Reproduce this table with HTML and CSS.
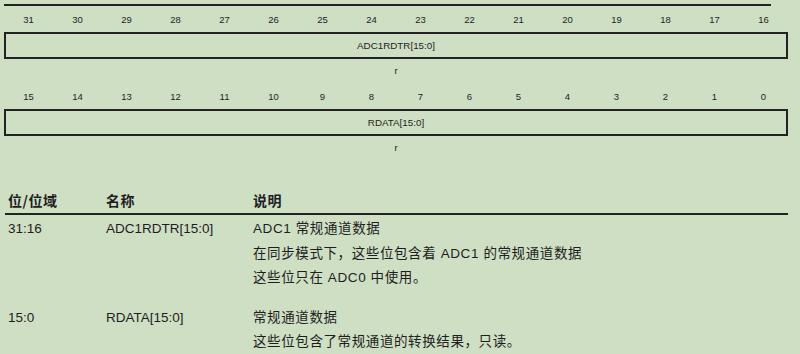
FILE: index.html
```html
<!DOCTYPE html>
<html lang="zh-CN">
<head>
  <meta charset="UTF-8">
  <title>ADC 常规数据寄存器</title>
  <link rel="stylesheet" href="styles.css">
</head>
<body>

  <div class="reg">
    <div class="topline"></div>

    <div class="bits">
      <span>31</span><span>30</span><span>29</span><span>28</span>
      <span>27</span><span>26</span><span>25</span><span>24</span>
      <span>23</span><span>22</span><span>21</span><span>20</span>
      <span>19</span><span>18</span><span>17</span><span>16</span>
    </div>
    <div class="field">ADC1RDTR[15:0]</div>
    <div class="access">r</div>

    <div class="bits">
      <span>15</span><span>14</span><span>13</span><span>12</span>
      <span>11</span><span>10</span><span>9</span><span>8</span>
      <span>7</span><span>6</span><span>5</span><span>4</span>
      <span>3</span><span>2</span><span>1</span><span>0</span>
    </div>
    <div class="field">RDATA[15:0]</div>
    <div class="access">r</div>
  </div>

  <div class="desc">
    <div class="desc-head">
      <div class="c-bit">位/位域</div>
      <div class="c-name">名称</div>
      <div class="c-text">说明</div>
    </div>

    <div class="desc-row">
      <div class="c-bit">31:16</div>
      <div class="c-name">ADC1RDTR[15:0]</div>
      <div class="c-text">
        <p>ADC1 常规通道数据</p>
        <p>在同步模式下，这些位包含着 ADC1 的常规通道数据</p>
        <p>这些位只在 ADC0 中使用。</p>
      </div>
    </div>

    <div class="desc-row second">
      <div class="c-bit">15:0</div>
      <div class="c-name">RDATA[15:0]</div>
      <div class="c-text">
        <p>常规通道数据</p>
        <p>这些位包含了常规通道的转换结果，只读。</p>
      </div>
    </div>
  </div>

</body>
</html>
```

FILE: styles.css
```css
body {
  margin: 0;
  background: #cedfc4;
  color: #1e1e1e;
  font-family: "Liberation Sans", "Noto Sans CJK SC", Arial, sans-serif;
}

/* register layout */
.reg {
  width: 784px;
  margin-left: 4px;
}

.topline {
  width: 767px;
  height: 2px;
  margin-top: 4px;
  background: #222;
}

.bits {
  display: grid;
  grid-template-columns: repeat(16, 1fr);
  align-items: center;
  height: 26px;
  font-size: 9.5px;
  text-align: center;
}

.field {
  box-sizing: border-box;
  height: 27px;
  border: 2px solid #222;
  display: flex;
  align-items: center;
  justify-content: center;
  font-size: 9.8px;
}

.access {
  height: 24px;
  line-height: 24px;
  font-size: 9.5px;
  text-align: center;
}

/* bit description table */
.desc {
  margin: 27px 12px 0 5px;
  font-size: 13.5px;
}

.desc-head,
.desc-row {
  display: flex;
}

.desc-head {
  height: 26px;
  line-height: 26px;
  border-bottom: 2px solid #222;
  font-family: "Noto Sans CJK SC", sans-serif;
  font-weight: 700;
  font-size: 14px;
  letter-spacing: 0.5px;
}

.desc-row {
  padding-top: 2px;
  line-height: 24.5px;
}

.desc-row.second {
  padding-top: 15px;
}

.c-bit {
  width: 98px;
  padding-left: 3px;
}

.c-name {
  width: 147px;
}

.c-text {
  flex: 1;
}

.desc-row .c-text {
  letter-spacing: 0.6px;
}

.c-text p {
  margin: 0;
}
```
